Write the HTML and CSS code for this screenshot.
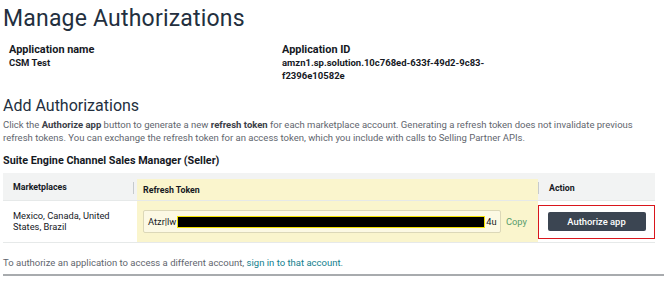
FILE: index.html
```html
<!DOCTYPE html>
<html lang="en">
<head>
  <meta charset="UTF-8" />
  <title>Manage Authorizations</title>
  <link rel="stylesheet" href="styles.css">
</head>
<body>
  <div class="page">
    <h1 class="title">Manage Authorizations</h1>

    <div class="app-info">
      <div class="info-col">
        <div class="info-label">Application name</div>
        <div class="info-value">CSM Test</div>
      </div>
      <div class="info-col">
        <div class="info-label">Application ID</div>
        <div class="info-value">amzn1.sp.solution.10c768ed-633f-49d2-9c83-<br>f2396e10582e</div>
      </div>
    </div>

    <h2 class="section-title">Add Authorizations</h2>
    <p class="intro">Click the <b>Authorize app</b> button to generate a new <b>refresh token</b> for each marketplace account. Generating a refresh token does not invalidate previous<br>refresh tokens. You can exchange the refresh token for an access token, which you include with calls to Selling Partner APIs.</p>

    <h3 class="app-name">Suite Engine Channel Sales Manager (Seller)</h3>

    <div class="auth-table">
      <div class="row head">
        <div class="cell market">Marketplaces</div>
        <div class="cell token">
          <span class="divider"></span>
          <div class="hl">Refresh Token</div>
        </div>
        <div class="cell action">
          <span class="divider"></span>
          <span>Action</span>
        </div>
      </div>
      <div class="row body">
        <div class="cell market">Mexico, Canada, United States, Brazil</div>
        <div class="cell token">
          <div class="hl">
            <div class="token-box">
              <span>Atzr|lw</span><span class="redact"></span><span>4u</span>
            </div>
            <a class="copy" href="#">Copy</a>
          </div>
        </div>
        <div class="cell action">
          <div class="btn-frame">
            <button class="btn">Authorize app</button>
          </div>
        </div>
      </div>
    </div>

    <p class="note">To authorize an application to access a different account, <a href="#">sign in to that account.</a></p>
    <div class="rule"></div>
  </div>
</body>
</html>
```

FILE: styles.css
```css
body {
  margin: 0;
  background: #fff;
  font-family: Roboto, 'Open Sans', sans-serif;
  color: #16191f;
}

.page {
  padding: 0 7px 0 3px;
}

.title {
  margin: 0;
  padding-top: 5px;
  font-size: 23px;
  font-weight: 400;
  line-height: 27px;
  letter-spacing: 0.2px;
  color: #232f3e;
}

.app-info {
  display: flex;
  margin-top: 11px;
  padding-left: 6px;
}

.info-col {
  width: 273px;
}

.info-label {
  font-weight: 700;
  font-size: 10.9px;
  line-height: 13px;
}

.info-value {
  font-weight: 700;
  font-size: 9.5px;
  line-height: 13px;
}

.section-title {
  margin: 14px 0 0;
  font-size: 16px;
  font-weight: 400;
  line-height: 20px;
  color: #232f3e;
}

.intro {
  margin: 2px 0 0;
  font-size: 9.5px;
  line-height: 13px;
  color: #5f666e;
}

.intro b {
  color: #3b4048;
}

.app-name {
  margin: 10px 0 0;
  font-size: 10.8px;
  font-weight: 700;
  line-height: 13px;
}

.auth-table {
  width: 652px;
  margin-top: 6px;
  font-size: 9.3px;
}

.row {
  display: grid;
  grid-template-columns: 130px 405px 117px;
  border-bottom: 1px solid #e6e9e9;
}

.row.head {
  height: 27px;
  background: #f2f3f3;
  font-weight: 700;
  font-size: 8.8px;
}

.row.body {
  height: 41px;
}

.cell {
  display: flex;
  align-items: center;
}

.cell.market {
  padding-left: 10px;
}

.row.body .cell.market {
  padding-right: 18px;
  line-height: 10.5px;
}

.divider {
  width: 1px;
  height: 12px;
  background: #c6cacd;
  flex-shrink: 0;
}

.cell.token {
  align-items: stretch;
}

.head .cell.token .divider {
  align-self: center;
  margin-top: 2px;
}

.hl {
  display: flex;
  align-items: center;
  width: 395px;
  margin-left: 3px;
  background: #faf5cd;
}

.head .hl {
  margin-top: 6px;
  padding-left: 6px;
}

.body .hl {
  margin-left: 4px;
  padding-left: 6px;
}

.cell.action .divider {
  margin-right: 10px;
}

.head .cell.action {
  padding-top: 2px;
}

.token-box {
  display: flex;
  align-items: center;
  width: 352px;
  height: 21px;
  padding-left: 4px;
  border: 1px solid #dcd8b8;
  border-radius: 2px;
  background: #fcf9e4;
}

.redact {
  width: 306px;
  height: 10px;
  margin: 0 1px 0 1px;
  background: #000;
  border: 1px solid #f2e100;
}

.copy {
  margin-left: 5px;
  color: #579c6c;
  text-decoration: none;
}

.btn-frame {
  width: 115px;
  height: 32px;
  border: 1px solid #d9161c;
  display: flex;
  align-items: center;
  justify-content: center;
}

.btn {
  width: 98px;
  height: 19px;
  border: none;
  border-radius: 2px;
  background: #3b4552;
  color: #fff;
  font-family: Roboto, sans-serif;
  font-size: 9.4px;
  font-weight: 500;
  cursor: pointer;
}

.note {
  margin: 14px 0 0;
  font-size: 9.5px;
  line-height: 12px;
  color: #5f666e;
}

.note a {
  color: #12808e;
  text-decoration: none;
}

.rule {
  height: 2px;
  margin-top: 5px;
  width: 661px;
  background: #a8abae;
}
```
